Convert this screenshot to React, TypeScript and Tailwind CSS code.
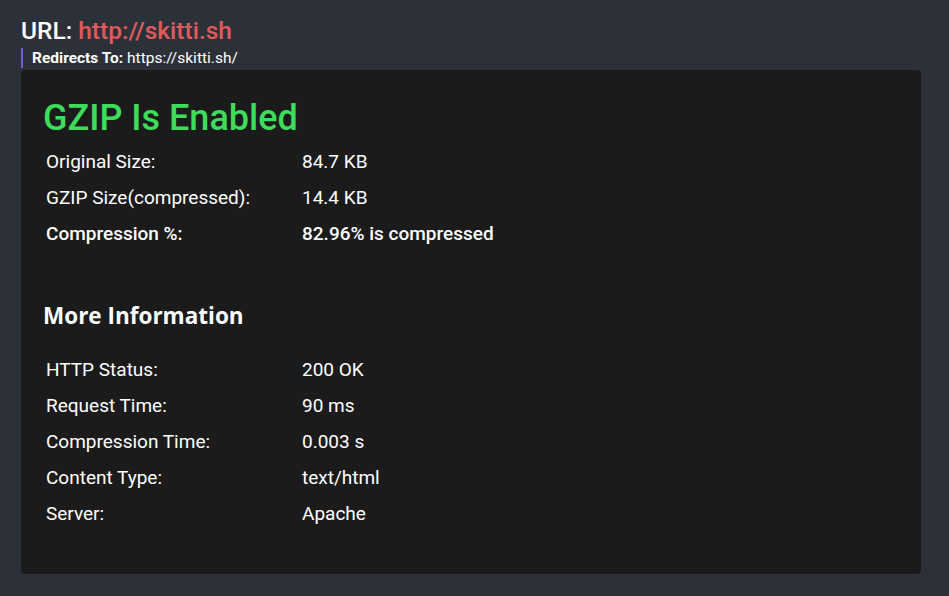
import React from 'react';

const summary = [
  { label: 'Original Size:', value: '84.7 KB' },
  { label: 'GZIP Size(compressed):', value: '14.4 KB' },
  { label: 'Compression %:', value: '82.96% is compressed', bold: true },
];

const info = [
  { label: 'HTTP Status:', value: '200 OK' },
  { label: 'Request Time:', value: '90 ms' },
  { label: 'Compression Time:', value: '0.003 s' },
  { label: 'Content Type:', value: 'text/html' },
  { label: 'Server:', value: 'Apache' },
];

type Row = { label: string; value: string; bold?: boolean };

const InfoTable: React.FC<{ rows: Row[] }> = ({ rows }) => (
  <table className="border-collapse text-[19px] text-white">
    <tbody>
      {rows.map((row) => (
        <tr key={row.label} className={`h-9 ${row.bold ? 'font-medium' : ''}`}>
          <td className="w-[259px] pl-[3px] align-middle">{row.label}</td>
          <td className="align-middle">{row.value}</td>
        </tr>
      ))}
    </tbody>
  </table>
);

const App: React.FC = () => {
  return (
    <div
      className="min-h-[596px] bg-[#2c3139] px-[21px] pt-[16px] pb-[22px]"
      style={{ fontFamily: 'Roboto, "Liberation Sans", sans-serif' }}
    >
      <h1 className="text-[24.5px] font-medium leading-[30px] text-white">
        URL: <span className="text-[#e05a5b]">http://skitti.sh</span>
      </h1>
      <div className="mt-[2px] w-[300px] border-l-2 border-[#6b5fc9] pl-[9px] text-[15.5px] leading-[20px] text-white">
        <span className="font-bold">Redirects To:</span> https://skitti.sh/
      </div>
      <div className="mt-[2px] mr-[7px] rounded bg-[#1b1b1b] px-[22px] pt-[25px] pb-[42px]">
        <h2 className="text-[36px] font-medium leading-[46px] text-[#3ddc5a]">GZIP Is Enabled</h2>
        <div className="mt-[3px]">
          <InfoTable rows={summary} />
        </div>
        <h3
          className="mt-[49px] text-[22.5px] font-bold leading-[30px] text-white"
          style={{ fontFamily: '"Open Sans", "Liberation Sans", sans-serif' }}
        >
          More Information
        </h3>
        <div className="mt-[21px]">
          <InfoTable rows={info} />
        </div>
      </div>
    </div>
  );
};

export default App;
